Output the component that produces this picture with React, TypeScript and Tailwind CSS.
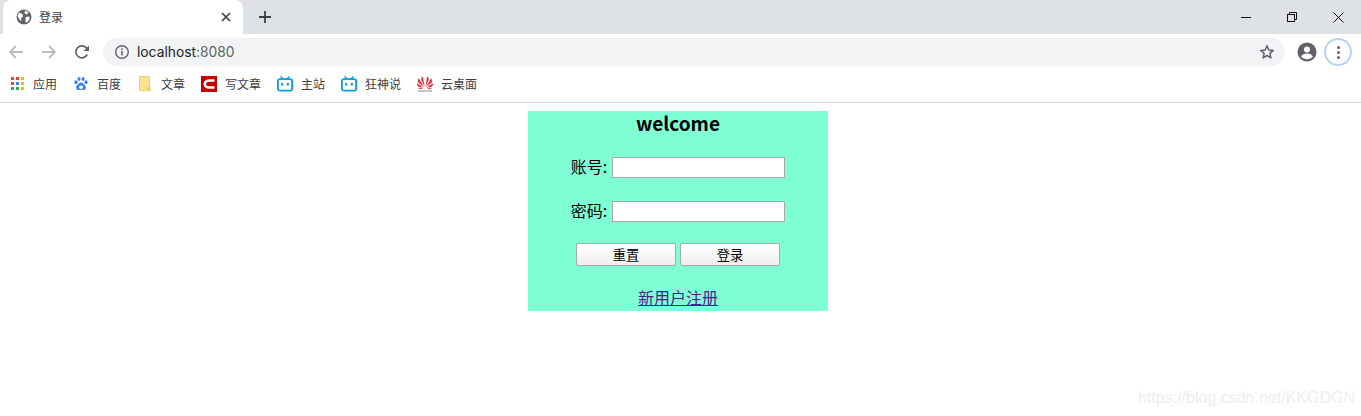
const cjk = "font-['Noto_Sans_CJK_SC','Noto_Sans',sans-serif]";

function Bookmark({ icon, label }: { icon: React.ReactNode; label: string }) {
  return (
    <div className="flex items-center gap-[8px]">
      <span className="flex h-4 w-[16px] items-center justify-center">{icon}</span>
      <span className="text-[12px] leading-4 text-[#3c4043]">{label}</span>
    </div>
  );
}

const Bili = () => (
  <svg width="16" height="16" viewBox="0 0 16 16">
    <path d="M4 0.800 6 3M12 0.800 10 3" stroke="#00a1d6" strokeWidth="1.400" strokeLinecap="round" />
    <rect x="0.900" y="3.200" width="14.200" height="11.400" rx="2.200" fill="none" stroke="#00a1d6" strokeWidth="1.800" />
    <rect x="4.200" y="7" width="2" height="2.600" fill="#00a1d6" />
    <rect x="9.800" y="7" width="2" height="2.600" fill="#00a1d6" />
  </svg>
);

const Apps = () => {
  const c = ["#ea4335", "#ea4335", "#fbbc04", "#ea4335", "#4285f4", "#fbbc04", "#34a853", "#34a853", "#fbbc04"];
  return (
    <span className="grid grid-cols-3 gap-[2px]">
      {c.map((x, i) => (
        <span key={i} className="h-[3px] w-[3px]" style={{ background: x }} />
      ))}
    </span>
  );
};

const Baidu = () => (
  <svg width="16" height="16" viewBox="0 0 16 16" fill="#3a7ff6">
    <ellipse cx="3" cy="6.200" rx="1.600" ry="2" />
    <ellipse cx="6" cy="3" rx="1.500" ry="2.100" />
    <ellipse cx="10" cy="3" rx="1.500" ry="2.100" />
    <ellipse cx="13" cy="6.200" rx="1.600" ry="2" />
    <path d="M8 6.500c2 0 2.600 2 4 3 1.600 1.200 1 4.600-1.600 4.600-1 0-1.600-.4-2.400-.4s-1.400.4-2.400.4C3 14.100 2.400 10.700 4 9.500c1.400-1 2-3 4-3z" />
    <ellipse cx="8" cy="11.200" rx="2" ry="1.700" fill="#fff" />
  </svg>
);

const Folder = () => (
  <svg width="16" height="16" viewBox="0 0 16 16">
    <path d="M2.500 0.500H12.500V14.500H2.500Z" fill="#fde293" stroke="#f5cf6b" />
    <rect x="10.500" y="11" width="3" height="4" fill="#f4c95d" />
  </svg>
);

const Csdn = () => (
  <svg width="16" height="16" viewBox="0 0 16 16">
    <rect width="16" height="16" fill="#c80000" />
    <path d="M13.500 4.500H8.500C5 4.500 3.800 6.500 3.800 8s1.200 3.500 4.700 3.500h5" fill="none" stroke="#fff" strokeWidth="2.600" />
  </svg>
);

const Huawei = () => (
  <svg width="16" height="16" viewBox="0 0 16 16">
    <g fill="#e8353e">
      <path d="M7.600 11 5.900 0.500C4.400 1.200 3.900 2.800 4.400 4.300z" />
      <path d="M8.400 11 10.100 0.500c1.500.7 2 2.300 1.500 3.800z" />
      <path d="M7 11 1.900 2.400C.6 3.800.4 5.400 1.400 6.800z" />
      <path d="M9 11 14.100 2.400c1.300 1.400 1.500 3 .5 4.400z" />
      <path d="M6.500 11.500 0 7.200c-.2 1.800.6 3.300 2.300 4z" />
      <path d="M9.500 11.500 16 7.200c.2 1.800-.6 3.300-2.300 4z" />
      <path d="M6 12.100H1.300c.6 1 1.900 1.200 2.900 1z" />
      <path d="M10 12.100h4.700c-.6 1-1.900 1.200-2.900 1z" />
    </g>
    <rect x="1" y="14.500" width="14" height="1" fill="#8a8a8a" />
  </svg>
);

export default function App() {
  return (
    <div className={`flex h-[416px] w-[1361px] flex-col overflow-hidden bg-white ${cjk}`}>
      {/* title bar */}
      <div className="flex h-[34px] items-end bg-[#dee1e6]">
        <div className="ml-[3px] flex h-[34px] w-[240px] items-center rounded-t-[8px] bg-white pl-[13px] pr-[11px]">
          <svg width="16" height="16" viewBox="0 0 16 16">
            <circle cx="8" cy="8" r="7.500" fill="#5f6368" />
            <path d="M3 3.500 6.500 5 7 7.500 5 9 5.500 12 3.500 10.500 1.500 7ZM9 1.500 12.500 3 11 5.500 8.500 4.500ZM9.500 8 13.500 7.500 13.500 10.500 11 13.500 9.500 13Z" fill="#fff" />
          </svg>
          <span className="ml-[7px] flex-1 text-[12px] leading-4 text-[#3c4043]">登录</span>
          <svg width="10" height="10" viewBox="0 0 10 10" className="mr-[1px]">
            <path d="M1 1 9 9M9 1 1 9" stroke="#3c4043" strokeWidth="1.700" />
          </svg>
        </div>
        <div className="mb-[10px] ml-[15px] flex h-[14px] w-[14px]">
          <svg width="14" height="14" viewBox="0 0 14 14">
            <path d="M7 1V13M1 7H13" stroke="#3c4043" strokeWidth="1.800" />
          </svg>
        </div>
        <div className="ml-auto flex h-[34px] items-center">
          <div className="flex w-[46px] justify-center">
            <svg width="10" height="10" viewBox="0 0 10 10"><path d="M0 5.500H10" stroke="#111" /></svg>
          </div>
          <div className="flex w-[46px] justify-center">
            <svg width="10" height="10" viewBox="0 0 10 10">
              <rect x="0.500" y="2.500" width="7" height="7" fill="none" stroke="#111" />
              <path d="M2.500 2.500V0.500H9.500V7.500H7.500" fill="none" stroke="#111" />
            </svg>
          </div>
          <div className="flex w-[46px] justify-center">
            <svg width="11" height="11" viewBox="0 0 11 11"><path d="M.5.500 10.500 10.500M10.500.500.500 10.500" stroke="#111" /></svg>
          </div>
        </div>
      </div>

      {/* toolbar */}
      <div className="flex h-[36px] items-center pl-[8px] pr-[8px]">
        <svg width="16" height="16" viewBox="0 0 16 16">
          <path d="M15 8H2M8 2 2 8l6 6" fill="none" stroke="#babcbe" strokeWidth="1.800" />
        </svg>
        <svg width="16" height="16" viewBox="0 0 16 16" className="ml-[17px]">
          <path d="M1 8H14M8 2l6 6-6 6" fill="none" stroke="#babcbe" strokeWidth="1.800" />
        </svg>
        <svg width="16" height="16" viewBox="0 0 16 16" className="ml-[17px]">
          <path d="M13.200 10.500A6 6 0 1 1 12.200 3.700L14 5.500" fill="none" stroke="#5f6368" strokeWidth="1.700" />
          <path d="M15 1.500V7H9.500Z" fill="#5f6368" />
        </svg>
        <div className="ml-[13px] flex h-[28px] w-[1182px] items-center rounded-full bg-[#f1f3f4] pl-[11px] pr-[10px]">
          <svg width="16" height="16" viewBox="0 0 16 16">
            <circle cx="8" cy="8" r="6.300" fill="none" stroke="#5f6368" strokeWidth="1.400" />
            <path d="M8 7V11.500" stroke="#5f6368" strokeWidth="1.500" />
            <path d="M8 4.300V6" stroke="#5f6368" strokeWidth="1.500" />
          </svg>
          <span className="ml-[7px] font-['Inter',sans-serif] text-[13.800px] leading-5">
            <span className="text-[#202124]">localhost</span>
            <span className="text-[#5f6368]">:8080</span>
          </span>
          <svg width="16" height="16" viewBox="0 0 16 16" className="ml-auto">
            <path d="M8 1.800 9.800 6l4.500.4-3.400 3 1 4.400L8 11.500l-3.900 2.300 1-4.400-3.400-3L6.200 6Z" fill="none" stroke="#5f6368" strokeWidth="1.500" strokeLinejoin="round" />
          </svg>
        </div>
        <svg width="20" height="20" viewBox="0 0 20 20" className="ml-[12px]">
          <circle cx="10" cy="10" r="9.500" fill="#5f6368" />
          <circle cx="10" cy="7.500" r="3" fill="#fff" />
          <path d="M4 14.500c1.500-2.400 3.800-3 6-3s4.500.6 6 3c-1.500 1.800-3.600 2.700-6 2.700s-4.500-.9-6-2.700z" fill="#fff" />
        </svg>
        <div className="ml-[7px] flex h-[28px] w-[28px] flex-col items-center justify-center gap-[2px] rounded-full border-2 border-[#b9d2f4]">
          <span className="h-[3px] w-[3px] rounded-full bg-[#5f6368]" />
          <span className="h-[3px] w-[3px] rounded-full bg-[#5f6368]" />
          <span className="h-[3px] w-[3px] rounded-full bg-[#5f6368]" />
        </div>
      </div>

      {/* bookmarks */}
      <div className="flex h-[33px] items-center gap-[16px] border-b border-[#d9dadc] pb-[5px] pl-[9px]">
        <Bookmark icon={<Apps />} label="应用" />
        <Bookmark icon={<Baidu />} label="百度" />
        <Bookmark icon={<Folder />} label="文章" />
        <Bookmark icon={<Csdn />} label="写文章" />
        <Bookmark icon={<Bili />} label="主站" />
        <Bookmark icon={<Bili />} label="狂神说" />
        <Bookmark icon={<Huawei />} label="云桌面" />
      </div>

      {/* page */}
      <div className="relative flex-1 bg-white">
        <div className="ml-[528px] mt-[8px] flex h-[200px] w-[300px] flex-col items-center bg-[#7fffd4] text-[16px] text-black">
          <h1 className="h-[26px] text-[19px] font-bold leading-[24px]">welcome</h1>
          <label className="mt-[20px] flex h-[21px] items-center gap-[5px] leading-[19px]">
            <span className="-translate-y-px">账号:</span>
            <input className="h-[21px] w-[173px] border border-[#a9a9a9] bg-white" />
          </label>
          <label className="mt-[23px] flex h-[21px] items-center gap-[5px] leading-[19px]">
            <span className="-translate-y-px">密码:</span>
            <input type="password" className="h-[21px] w-[173px] border border-[#a9a9a9] bg-white" />
          </label>
          <div className="mt-[21px] flex gap-[4px]">
            <button className="h-[23px] w-[100px] rounded-[2px] border border-[#a9a9a9] bg-gradient-to-b from-white to-[#eeeeee] text-[13.333px] leading-[21px] text-black">
              重置
            </button>
            <button className="h-[23px] w-[100px] rounded-[2px] border border-[#a9a9a9] bg-gradient-to-b from-white to-[#eeeeee] text-[13.333px] leading-[21px] text-black">
              登录
            </button>
          </div>
          <a href="#" className="mt-[20px] text-[16px] leading-[22px] text-[#551a8b] underline">
            新用户注册
          </a>
        </div>
        <span className="absolute bottom-[8px] right-[6px] font-['Liberation_Sans',sans-serif] text-[16px] leading-5 text-[#eeeeee]">
          https://blog.csdn.net/KKGDGN
        </span>
      </div>
    </div>
  );
}
